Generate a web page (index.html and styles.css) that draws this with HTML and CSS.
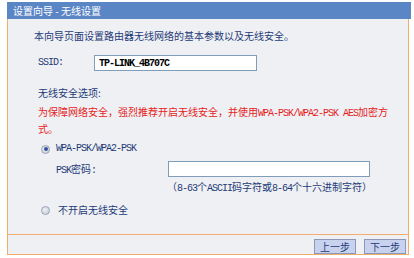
FILE: index.html
```html
<!DOCTYPE html>
<html lang="zh-CN">
<head>
    <meta charset="UTF-8">
    <title>设置向导 - 无线设置</title>
    <link rel="stylesheet" href="styles.css">
</head>
<body>

    <div class="panel">
        <div class="title">设置向导 - 无线设置</div>

        <div class="content">
            <p class="intro">本向导页面设置路由器无线网络的基本参数以及无线安全。</p>

            <div class="row ssid-row">
                <span class="label en">SSID:</span>
                <input type="text" class="text-input ssid-input" value="TP-LINK_4B707C">
            </div>

            <p class="section">无线安全选项:</p>
            <p class="warn">为保障网络安全，强烈推荐开启无线安全，并使用<span class="en">WPA-PSK/WPA2-PSK AES</span>加密方式。</p>

            <div class="row radio-row">
                <span class="radio checked"></span>
                <span class="en">WPA-PSK/WPA2-PSK</span>
            </div>

            <div class="row psk-row">
                <span class="psk-label"><span class="en">PSK</span>密码<span class="en">:</span></span>
                <input type="text" class="text-input psk-input" value="">
            </div>
            <p class="hint">（<span class="en">8-63</span>个<span class="en">ASCII</span>码字符或<span class="en">8-64</span>个十六进制字符）</p>

            <div class="row radio-row off-row">
                <span class="radio"></span>
                <span class="off-label">不开启无线安全</span>
            </div>
        </div>

        <div class="footer">
            <button class="btn">上一步</button>
            <button class="btn">下一步</button>
        </div>
    </div>

</body>
</html>
```

FILE: styles.css
```css
body {
    margin: 0;
    background: #ffffff;
    font-family: "Noto Sans CJK SC", "Liberation Sans", sans-serif;
    font-size: 10px;
    color: #1e3a78;
}

p {
    margin: 0;
}

.en {
    font-family: "Liberation Mono", "Noto Sans CJK SC", monospace;
    letter-spacing: -1px;
    line-height: 14px;
}

.panel {
    margin: 2px 0 0 7px;
    width: 402px;
}

.title {
    background: #5b86c6;
    color: #ffffff;
    height: 17px;
    line-height: 17px;
    padding-left: 6px;
    margin-right: -2px;
}

.content {
    background: #eff0f3;
    border-left: 1px solid #f2ad6e;
    border-right: 1px solid #f2ad6e;
    padding: 9px 0 16px 30px;
    line-height: 16px;
}

.intro {
    margin-left: -4px;
}

.row {
    display: flex;
    align-items: center;
    height: 16px;
}

.ssid-row {
    margin-top: 11px;
}

.ssid-row .label {
    width: 56px;
}

.text-input {
    box-sizing: border-box;
    height: 16px;
    border: 1px solid #7f9db9;
    background: #ffffff;
    padding: 0 4px;
    font-family: "Liberation Mono", monospace;
    font-size: 10px;
    font-weight: bold;
    letter-spacing: -1px;
    color: #000000;
    outline: none;
}

.ssid-input {
    width: 163px;
}

.section {
    margin-top: 14px;
}

.warn {
    margin-top: 3px;
    color: #e5221c;
    width: 362px;
}

.radio-row {
    margin-top: 4px;
    padding-left: 3px;
}

.radio {
    box-sizing: border-box;
    width: 9px;
    height: 9px;
    border-radius: 50%;
    border: 1px solid #9aa3b6;
    background: radial-gradient(circle at 40% 40%, #eef0f4 0, #c2c8d4 100%);
    margin-right: 6px;
    position: relative;
}

.radio.checked::after {
    content: "";
    position: absolute;
    left: 1.5px;
    top: 1.5px;
    width: 4px;
    height: 4px;
    border-radius: 50%;
    background: #34539e;
}

.psk-row {
    margin-top: 4px;
    padding-left: 18px;
}

.psk-label {
    width: 112px;
}

.psk-input {
    width: 202px;
}

.hint {
    margin-top: 2px;
    padding-left: 129px;
}

.off-row {
    margin-top: 6px;
}

.off-label {
    margin-left: 2px;
}

.footer {
    background: #eff0f3;
    border: 1px solid #f2ad6e;
    display: flex;
    justify-content: flex-end;
    align-items: flex-start;
    gap: 8px;
    padding: 4px 2px 0 0;
    box-sizing: border-box;
    height: 21px;
}

.btn {
    box-sizing: border-box;
    width: 42px;
    height: 15px;
    padding: 0;
    border: 1px solid #8c98b8;
    background: #c8d2ee;
    color: #1e3a78;
    font-family: "Noto Sans CJK SC", sans-serif;
    font-size: 10px;
    line-height: 13px;
}
```
